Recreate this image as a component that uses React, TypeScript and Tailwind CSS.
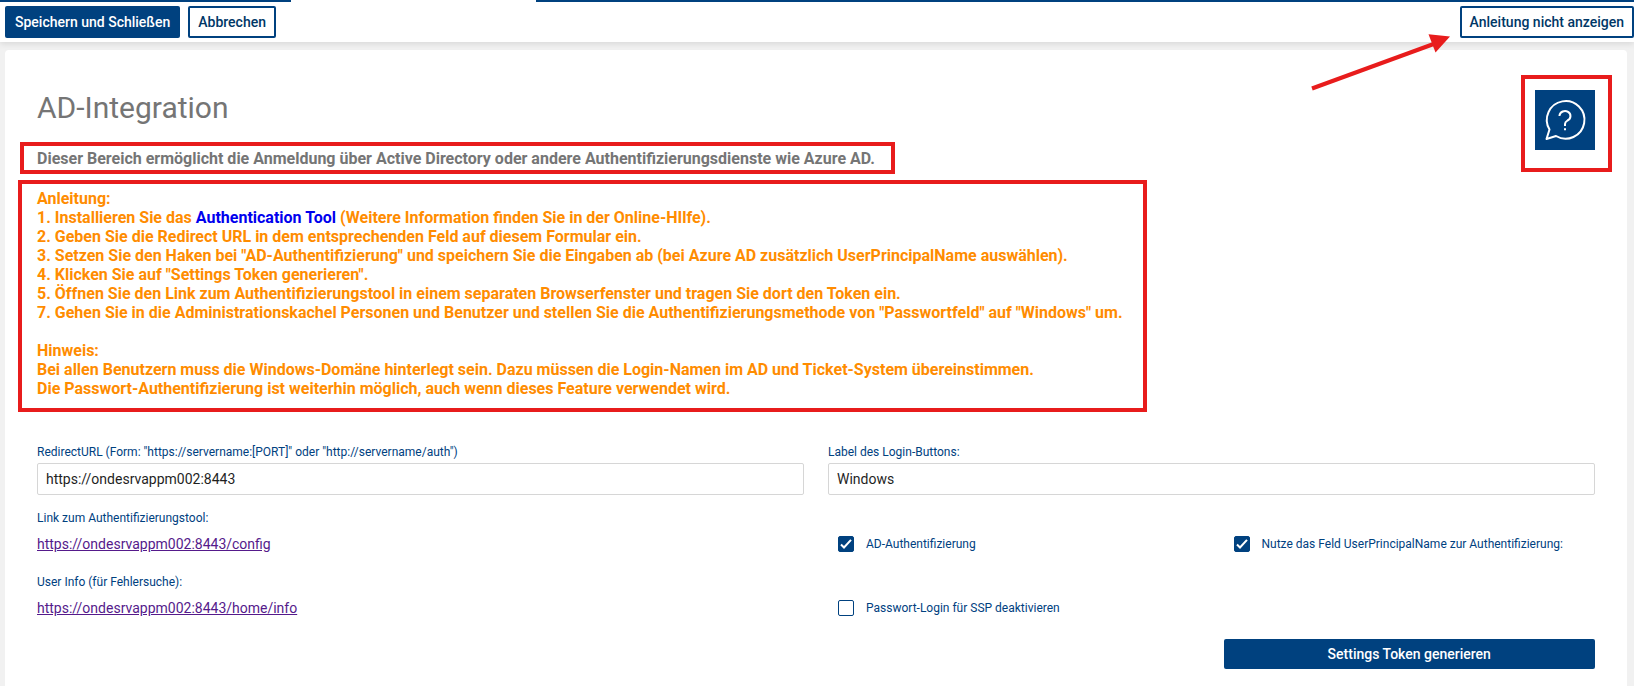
import { useState } from "react";

const STEPS_AFTER_TOOL = [
  '2. Geben Sie die Redirect URL in dem entsprechenden Feld auf diesem Formular ein.',
  '3. Setzen Sie den Haken bei "AD-Authentifizierung" und speichern Sie die Eingaben ab (bei Azure AD zusätzlich UserPrincipalName auswählen).',
  '4. Klicken Sie auf "Settings Token generieren".',
  '5. Öffnen Sie den Link zum Authentifizierungstool in einem separaten Browserfenster und tragen Sie dort den Token ein.',
  '7. Gehen Sie in die Administrationskachel Personen und Benutzer und stellen Sie die Authentifizierungsmethode von "Passwortfeld" auf "Windows" um.',
];

function Toolbar() {
  return (
    <header className="relative z-10 bg-white shadow-[0_2px_6px_rgba(0,0,0,0.1)]">
      <div className="flex h-0.5">
        <div className="w-[291px] bg-[#00417f]" />
        <div className="w-[245px]" />
        <div className="grow bg-[#00417f]" />
      </div>
      <div className="flex items-center gap-2 pt-1 pb-1 pl-[5px] text-sm font-medium">
        <button type="button" className="h-8 rounded-xs bg-[#00417f] px-2.5 whitespace-nowrap text-white">
          Speichern und Schließen
        </button>
        <button type="button" className="h-8 rounded-xs border-2 border-[#00417f] px-2 text-[#003766]">
          Abbrechen
        </button>
        <div className="relative ml-auto">
          <button
            type="button"
            className="h-8 rounded-xs border-2 border-[#00417f] px-2 whitespace-nowrap text-[#003766]"
          >
            Anleitung nicht anzeigen
          </button>
          <svg
            className="pointer-events-none absolute top-7 right-full mr-[9px]"
            width="140"
            height="58"
            viewBox="0 0 140 58"
            aria-hidden="true"
          >
            <path d="M1 54.500 L124 9.500" stroke="#e81c1c" strokeWidth="4" fill="none" />
            <path d="M139 2.500 L117.500 0.200 L124.500 18.500 Z" fill="#e81c1c" />
          </svg>
        </div>
      </div>
    </header>
  );
}

function TextField({ id, label, initial }: { id: string; label: string; initial: string }) {
  const [value, setValue] = useState(initial);
  return (
    <div className="flex flex-col gap-[3px]">
      <label htmlFor={id} className="text-xs text-[#00417f]">
        {label}
      </label>
      <input
        id={id}
        type="text"
        value={value}
        onChange={(e) => setValue(e.target.value)}
        className="h-8 w-full rounded-xs border border-[#d6d6d6] px-2 text-sm text-[#1f1f1f]"
      />
    </div>
  );
}

function CheckField({ id, label, initial }: { id: string; label: string; initial: boolean }) {
  const [checked, setChecked] = useState(initial);
  return (
    <div className="flex items-center gap-3 pt-[26px] pl-2.5">
      <span className="relative flex size-4">
        <input
          id={id}
          type="checkbox"
          checked={checked}
          onChange={(e) => setChecked(e.target.checked)}
          className="size-4 appearance-none rounded-xs border border-[#00417f] bg-white checked:bg-[#00417f]"
        />
        {checked && (
          <svg className="pointer-events-none absolute inset-0" width="16" height="16" viewBox="0 0 16 16">
            <path d="M3 8.500 L6 11.500 L13 3.800" stroke="#fff" strokeWidth="2" fill="none" />
          </svg>
        )}
      </span>
      <label htmlFor={id} className="text-xs text-[#00417f]">
        {label}
      </label>
    </div>
  );
}

function LinkField({ label, href }: { label: string; href: string }) {
  return (
    <div className="flex flex-col gap-2">
      <span className="text-xs text-[#00417f]">{label}</span>
      <a href={href} className="w-fit text-sm text-[#551a8b] underline">
        {href}
      </a>
    </div>
  );
}

export default function App() {
  return (
    <div className="min-h-screen bg-[#f1f1f1] font-['Roboto',sans-serif]">
      <Toolbar />
      <main className="mr-[7px] ml-[5px] pt-2">
        <div className="min-h-[636px] rounded-t-sm bg-white px-8 pt-10 pb-2">
          <div className="flex items-start justify-between">
            <div>
              <h1 className="text-[30px] leading-9 text-[#757575]">AD-Integration</h1>
              <p className="relative mt-[23px] w-fit text-base leading-[19px] font-bold text-[#757575]">
                Dieser Bereich ermöglicht die Anmeldung über Active Directory oder andere Authentifizierungsdienste wie
                Azure AD.
                <span className="pointer-events-none absolute -top-[7px] -right-5 -bottom-1.5 -left-[17px] border-4 border-[#e81c1c]" />
              </p>
            </div>
            <div className="relative">
              <a href="#hilfe" aria-label="Hilfe" className="flex size-15 items-center justify-center bg-[#00417f]">
                <svg width="60" height="60" viewBox="0 0 60 60" fill="none" stroke="#fff" strokeWidth="2">
                  <path d="M14.500 39.500 A18.800 18.800 0 1 1 21 46 L11.500 49 Z" strokeLinejoin="round" />
                  <path d="M24.500 26 V25.500 A5.500 5 0 1 1 32.500 30.500 Q30 32 30 34 V36" />
                  <path d="M30 38.300 V40.300" />
                </svg>
              </a>
              <span className="pointer-events-none absolute -top-[15px] -right-[17px] -bottom-[22px] -left-[14px] border-4 border-[#e81c1c]" />
            </div>
          </div>

          <section className="relative mt-[21px] w-fit text-base leading-[19px] font-bold text-[#ff8c00]">
            <p>Anleitung:</p>
            <p>
              1. Installieren Sie das{" "}
              <a href="#authentication-tool" className="text-[#0000ee]">
                Authentication Tool
              </a>{" "}
              (Weitere Information finden Sie in der Online-HIlfe).
            </p>
            {STEPS_AFTER_TOOL.map((step) => (
              <p key={step}>{step}</p>
            ))}
            <p className="mt-[19px]">Hinweis:</p>
            <p>
              Bei allen Benutzern muss die Windows-Domäne hinterlegt sein. Dazu müssen die Login-Namen im AD und
              Ticket-System übereinstimmen.
            </p>
            <p>Die Passwort-Authentifizierung ist weiterhin möglich, auch wenn dieses Feature verwendet wird.</p>
            <span className="pointer-events-none absolute -top-[9px] -right-6 -bottom-[14px] -left-[19px] border-4 border-[#e81c1c]" />
          </section>

          <form className="mt-[46px] grid grid-cols-4 gap-x-6" onSubmit={(e) => e.preventDefault()}>
            <div className="col-span-2">
              <TextField
                id="redirect-url"
                label={'RedirectURL (Form: "https://servername:[PORT]" oder "http://servername/auth")'}
                initial="https://ondesrvappm002:8443"
              />
            </div>
            <div className="col-span-2">
              <TextField id="login-label" label="Label des Login-Buttons:" initial="Windows" />
            </div>
            <div className="col-span-2 mt-[15px]">
              <LinkField label="Link zum Authentifizierungstool:" href="https://ondesrvappm002:8443/config" />
            </div>
            <div className="mt-[15px]">
              <CheckField id="ad-auth" label="AD-Authentifizierung" initial={true} />
            </div>
            <div className="mt-[15px]">
              <CheckField
                id="use-upn"
                label="Nutze das Feld UserPrincipalName zur Authentifizierung:"
                initial={true}
              />
            </div>
            <div className="col-span-2 mt-5">
              <LinkField label="User Info (für Fehlersuche):" href="https://ondesrvappm002:8443/home/info" />
            </div>
            <div className="col-span-2 mt-5">
              <CheckField id="ssp-login" label="Passwort-Login für SSP deaktivieren" initial={false} />
            </div>
            <button
              type="submit"
              className="col-start-4 mt-[21px] h-[30px] rounded-xs bg-[#00417f] text-sm font-medium text-white"
            >
              Settings Token generieren
            </button>
          </form>
        </div>
      </main>
    </div>
  );
}
